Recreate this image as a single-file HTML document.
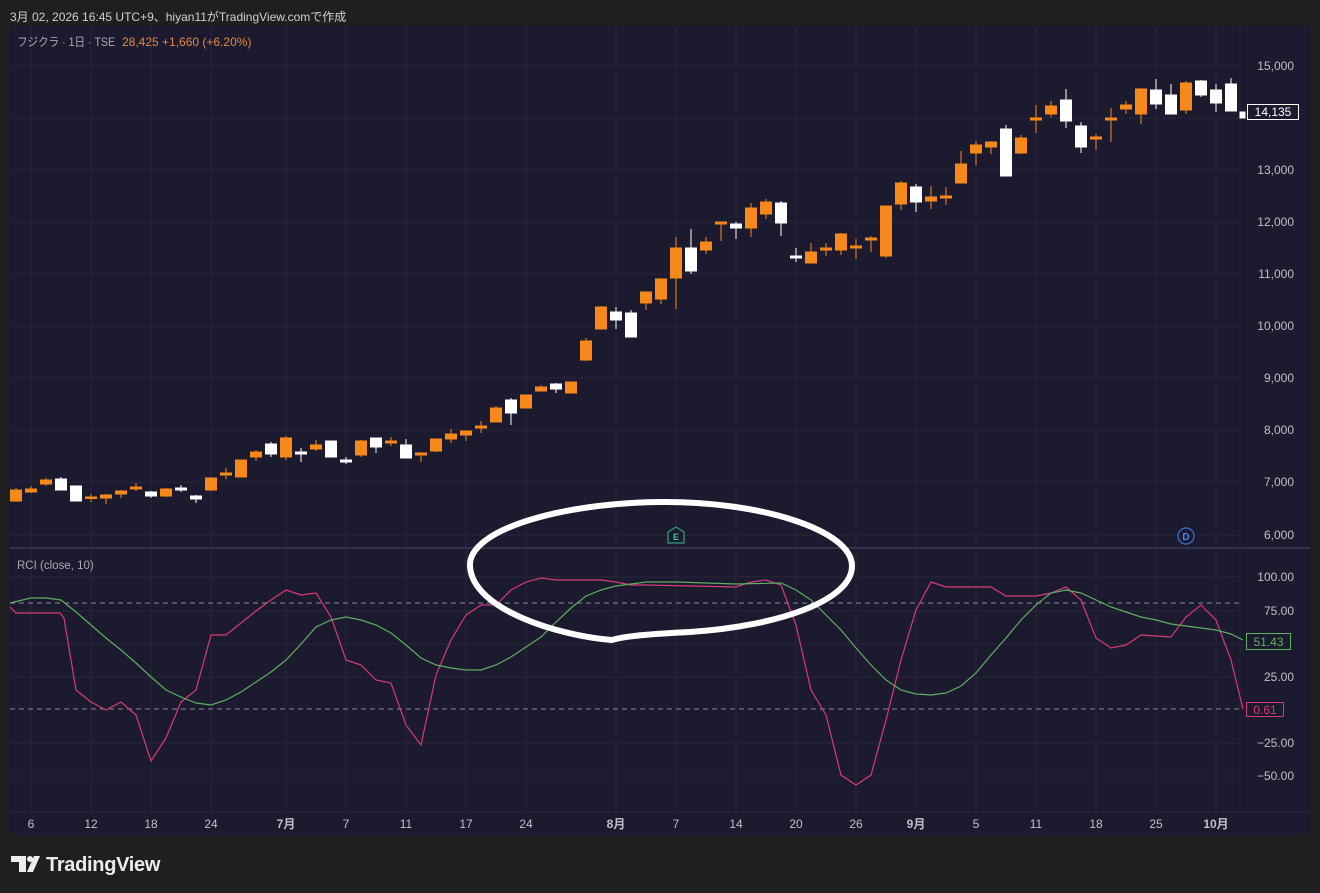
<!DOCTYPE html>
<html><head><meta charset="utf-8"><style>
html,body{margin:0;padding:0;background:#1f1f1f;width:1320px;height:893px;overflow:hidden}
svg{display:block}
text{font-family:"Liberation Sans","Noto Sans CJK JP",sans-serif}
</style></head><body>
<svg width="1320" height="893" viewBox="0 0 1320 893" xmlns="http://www.w3.org/2000/svg">
<rect width="1320" height="893" fill="#1f1f1f"/>
<text x="10" y="21" font-size="12" fill="#d0d0d0">3月 02, 2026 16:45 UTC+9、hiyan11がTradingView.comで作成</text>
<rect x="10" y="26" width="1300" height="809" fill="#1c1a2f"/>
<g stroke="#272539" stroke-width="1">
<path d="M31 26V812M91 26V812M151 26V812M211 26V812M286 26V812M346 26V812M406 26V812M466 26V812M526 26V812M616 26V812M676 26V812M736 26V812M796 26V812M856 26V812M916 26V812M976 26V812M1036 26V812M1096 26V812M1156 26V812M1216 26V812"/>
<path d="M10 66H1240M10 118H1240M10 170H1240M10 222H1240M10 274H1240M10 326H1240M10 378H1240M10 430H1240M10 482H1240M10 535H1240M10 577H1240M10 611H1240M10 644H1240M10 677H1240M10 743H1240M10 776H1240"/>
</g>
<line x1="10" y1="548" x2="1310" y2="548" stroke="#34324a" stroke-width="2"/>
<line x1="10" y1="812" x2="1310" y2="812" stroke="#2a2840"/>
<line x1="1240" y1="26" x2="1240" y2="812" stroke="#25233a"/>
<text x="17" y="46" font-size="12" fill="#a8a8b4" textLength="98" lengthAdjust="spacingAndGlyphs">フジクラ · 1日 · TSE</text>
<text x="122" y="46" font-size="12" fill="#e08a44">28,425  +1,660 (+6.20%)</text>
<text x="17" y="569" font-size="11.5" fill="#a8a8b4">RCI (close, 10)</text>
<g font-size="12" fill="#c0c0c8" text-anchor="end">
<text x="1294" y="70">15,000</text><text x="1294" y="174">13,000</text><text x="1294" y="226">12,000</text><text x="1294" y="278">11,000</text><text x="1294" y="330">10,000</text><text x="1294" y="382">9,000</text><text x="1294" y="434">8,000</text><text x="1294" y="486">7,000</text><text x="1294" y="539">6,000</text>
<text x="1294" y="581">100.00</text><text x="1294" y="615">75.00</text><text x="1294" y="681">25.00</text><text x="1294" y="747">−25.00</text><text x="1294" y="780">−50.00</text>
</g>
<g font-size="12" fill="#c0c0c8" text-anchor="middle">
<text x="31" y="828">6</text><text x="91" y="828">12</text><text x="151" y="828">18</text><text x="211" y="828">24</text><text x="286" y="828" font-weight="bold">7月</text><text x="346" y="828">7</text><text x="406" y="828">11</text><text x="466" y="828">17</text><text x="526" y="828">24</text><text x="616" y="828" font-weight="bold">8月</text><text x="676" y="828">7</text><text x="736" y="828">14</text><text x="796" y="828">20</text><text x="856" y="828">26</text><text x="916" y="828" font-weight="bold">9月</text><text x="976" y="828">5</text><text x="1036" y="828">11</text><text x="1096" y="828">18</text><text x="1156" y="828">25</text><text x="1216" y="828" font-weight="bold">10月</text>
</g>
<g stroke="#f7881a" fill="#f7881a" stroke-width="1">
<line x1="16" y1="488" x2="16" y2="502"/><rect x="10.5" y="490" width="11" height="11"/>
<line x1="31" y1="486" x2="31" y2="493"/><rect x="25.5" y="489" width="11" height="3"/>
<line x1="46" y1="478" x2="46" y2="486"/><rect x="40.5" y="480" width="11" height="4"/>
<line x1="91" y1="494" x2="91" y2="502"/><rect x="85.5" y="497" width="11" height="1.5"/>
<line x1="106" y1="494" x2="106" y2="504"/><rect x="100.5" y="495" width="11" height="3"/>
<line x1="121" y1="490" x2="121" y2="498"/><rect x="115.5" y="491" width="11" height="3"/>
<line x1="136" y1="483" x2="136" y2="491"/><rect x="130.5" y="487" width="11" height="2"/>
<line x1="166" y1="488" x2="166" y2="497"/><rect x="160.5" y="489" width="11" height="7"/>
<line x1="211" y1="477" x2="211" y2="491"/><rect x="205.5" y="478" width="11" height="12"/>
<line x1="226" y1="468" x2="226" y2="479"/><rect x="220.5" y="473" width="11" height="2"/>
<line x1="241" y1="460" x2="241" y2="477"/><rect x="235.5" y="460" width="11" height="17"/>
<line x1="256" y1="450" x2="256" y2="461"/><rect x="250.5" y="452" width="11" height="5"/>
<line x1="286" y1="436" x2="286" y2="460"/><rect x="280.5" y="438" width="11" height="19"/>
<line x1="316" y1="440" x2="316" y2="451"/><rect x="310.5" y="445" width="11" height="4"/>
<line x1="361" y1="440" x2="361" y2="457"/><rect x="355.5" y="441" width="11" height="14"/>
<line x1="391" y1="437" x2="391" y2="446"/><rect x="385.5" y="441" width="11" height="2"/>
<line x1="421" y1="453" x2="421" y2="462"/><rect x="415.5" y="453" width="11" height="2"/>
<line x1="436" y1="439" x2="436" y2="452"/><rect x="430.5" y="439" width="11" height="12"/>
<line x1="451" y1="429" x2="451" y2="443"/><rect x="445.5" y="434" width="11" height="5"/>
<line x1="466" y1="431" x2="466" y2="441"/><rect x="460.5" y="431" width="11" height="4"/>
<line x1="481" y1="421" x2="481" y2="433"/><rect x="475.5" y="426" width="11" height="2"/>
<line x1="496" y1="406" x2="496" y2="422"/><rect x="490.5" y="408" width="11" height="14"/>
<line x1="526" y1="395" x2="526" y2="408"/><rect x="520.5" y="395" width="11" height="13"/>
<line x1="541" y1="385" x2="541" y2="391"/><rect x="535.5" y="387" width="11" height="4"/>
<line x1="571" y1="382" x2="571" y2="393"/><rect x="565.5" y="382" width="11" height="11"/>
<line x1="586" y1="338" x2="586" y2="361"/><rect x="580.5" y="341" width="11" height="19"/>
<line x1="601" y1="306" x2="601" y2="329"/><rect x="595.5" y="307" width="11" height="22"/>
<line x1="646" y1="292" x2="646" y2="310"/><rect x="640.5" y="292" width="11" height="11"/>
<line x1="661" y1="278" x2="661" y2="304"/><rect x="655.5" y="279" width="11" height="20"/>
<line x1="676" y1="237" x2="676" y2="309"/><rect x="670.5" y="248" width="11" height="30"/>
<line x1="706" y1="237" x2="706" y2="254"/><rect x="700.5" y="242" width="11" height="8"/>
<line x1="721" y1="222" x2="721" y2="241"/><rect x="715.5" y="222" width="11" height="2"/>
<line x1="751" y1="203" x2="751" y2="237"/><rect x="745.5" y="208" width="11" height="20"/>
<line x1="766" y1="199" x2="766" y2="219"/><rect x="760.5" y="202" width="11" height="12"/>
<line x1="811" y1="243" x2="811" y2="263"/><rect x="805.5" y="252" width="11" height="11"/>
<line x1="826" y1="243" x2="826" y2="256"/><rect x="820.5" y="248" width="11" height="2"/>
<line x1="841" y1="233" x2="841" y2="255"/><rect x="835.5" y="234" width="11" height="16"/>
<line x1="856" y1="239" x2="856" y2="259"/><rect x="850.5" y="246" width="11" height="2"/>
<line x1="871" y1="236" x2="871" y2="252"/><rect x="865.5" y="238" width="11" height="2"/>
<line x1="886" y1="206" x2="886" y2="258"/><rect x="880.5" y="206" width="11" height="50"/>
<line x1="901" y1="181" x2="901" y2="210"/><rect x="895.5" y="183" width="11" height="21"/>
<line x1="931" y1="186" x2="931" y2="209"/><rect x="925.5" y="197" width="11" height="4"/>
<line x1="946" y1="187" x2="946" y2="205"/><rect x="940.5" y="196" width="11" height="2"/>
<line x1="961" y1="151" x2="961" y2="183"/><rect x="955.5" y="164" width="11" height="19"/>
<line x1="976" y1="141" x2="976" y2="165"/><rect x="970.5" y="145" width="11" height="8"/>
<line x1="991" y1="141" x2="991" y2="154"/><rect x="985.5" y="142" width="11" height="5"/>
<line x1="1021" y1="135" x2="1021" y2="154"/><rect x="1015.5" y="138" width="11" height="15"/>
<line x1="1036" y1="105" x2="1036" y2="133"/><rect x="1030.5" y="118" width="11" height="2"/>
<line x1="1051" y1="101" x2="1051" y2="117"/><rect x="1045.5" y="106" width="11" height="8"/>
<line x1="1096" y1="134" x2="1096" y2="150"/><rect x="1090.5" y="137" width="11" height="2"/>
<line x1="1111" y1="108" x2="1111" y2="142"/><rect x="1105.5" y="118" width="11" height="2"/>
<line x1="1126" y1="101" x2="1126" y2="114"/><rect x="1120.5" y="105" width="11" height="4"/>
<line x1="1141" y1="88" x2="1141" y2="124"/><rect x="1135.5" y="89" width="11" height="25"/>
<line x1="1186" y1="81" x2="1186" y2="114"/><rect x="1180.5" y="83" width="11" height="27"/>
</g>
<g stroke="#ffffff" fill="#ffffff" stroke-width="1">
<line x1="61" y1="477" x2="61" y2="490"/><rect x="55.5" y="479" width="11" height="11"/>
<rect x="70.5" y="486" width="11" height="15"/>
<line x1="151" y1="491" x2="151" y2="498"/><rect x="145.5" y="492" width="11" height="4"/>
<line x1="181" y1="485" x2="181" y2="492"/><rect x="175.5" y="488" width="11" height="2"/>
<line x1="196" y1="495" x2="196" y2="503"/><rect x="190.5" y="496" width="11" height="3"/>
<line x1="271" y1="442" x2="271" y2="457"/><rect x="265.5" y="444" width="11" height="10"/>
<line x1="301" y1="448" x2="301" y2="462"/><rect x="295.5" y="452" width="11" height="2"/>
<rect x="325.5" y="441" width="11" height="16"/>
<line x1="346" y1="457" x2="346" y2="464"/><rect x="340.5" y="460" width="11" height="2"/>
<line x1="376" y1="438" x2="376" y2="453"/><rect x="370.5" y="438" width="11" height="9"/>
<line x1="406" y1="439" x2="406" y2="458"/><rect x="400.5" y="445" width="11" height="13"/>
<line x1="511" y1="398" x2="511" y2="425"/><rect x="505.5" y="400" width="11" height="13"/>
<line x1="556" y1="383" x2="556" y2="393"/><rect x="550.5" y="384" width="11" height="5"/>
<line x1="616" y1="307" x2="616" y2="329"/><rect x="610.5" y="312" width="11" height="8"/>
<line x1="631" y1="310" x2="631" y2="337"/><rect x="625.5" y="313" width="11" height="24"/>
<line x1="691" y1="229" x2="691" y2="274"/><rect x="685.5" y="248" width="11" height="23"/>
<line x1="736" y1="222" x2="736" y2="239"/><rect x="730.5" y="224" width="11" height="4"/>
<line x1="781" y1="201" x2="781" y2="236"/><rect x="775.5" y="203" width="11" height="20"/>
<line x1="796" y1="248" x2="796" y2="262"/><rect x="790.5" y="256" width="11" height="2"/>
<line x1="916" y1="184" x2="916" y2="212"/><rect x="910.5" y="187" width="11" height="15"/>
<line x1="1006" y1="125" x2="1006" y2="176"/><rect x="1000.5" y="129" width="11" height="47"/>
<line x1="1066" y1="89" x2="1066" y2="128"/><rect x="1060.5" y="100" width="11" height="21"/>
<line x1="1081" y1="122" x2="1081" y2="153"/><rect x="1075.5" y="126" width="11" height="21"/>
<line x1="1156" y1="79" x2="1156" y2="109"/><rect x="1150.5" y="90" width="11" height="14"/>
<line x1="1171" y1="84" x2="1171" y2="114"/><rect x="1165.5" y="95" width="11" height="19"/>
<line x1="1201" y1="80" x2="1201" y2="97"/><rect x="1195.5" y="81" width="11" height="14"/>
<line x1="1216" y1="84" x2="1216" y2="112"/><rect x="1210.5" y="90" width="11" height="13"/>
<line x1="1231" y1="78" x2="1231" y2="111"/><rect x="1225.5" y="84" width="11" height="27"/>
<rect x="1240" y="112" width="5" height="6"/>
</g>
<rect x="1247.5" y="104.5" width="51" height="15" fill="#1c1a2f" stroke="#ffffff"/>
<text x="1273" y="116" font-size="12" fill="#ffffff" text-anchor="middle">14,135</text>
<g stroke="#8a889a" stroke-dasharray="5,4" stroke-width="1">
<line x1="10" y1="603" x2="1240" y2="603"/><line x1="10" y1="709" x2="1240" y2="709"/>
</g>
<polyline fill="none" stroke="#d63a7a" stroke-width="1.2" points="10,607 16,613 60,613 64,618 76,690 91,702 106,710 121,702 136,715 151,761 166,738 181,702 196,690 211,635 226,635 241,623 256,611 271,600 286,590 301,595 316,593 331,617 346,660 361,665 376,680 391,683 406,725 421,745 436,675 451,640 466,615 481,605 496,605 511,590 526,582 541,578 556,580 571,580 586,580 601,580 616,582 631,585 646,585 736,587 751,582 766,580 781,585 796,625 811,690 826,715 841,775 856,785 871,775 886,720 901,660 916,610 931,582 946,587 991,587 1006,596 1036,596 1051,593 1066,587 1081,600 1096,638 1111,648 1126,645 1141,635 1171,637 1186,617 1201,605 1216,620 1231,660 1243,709"/>
<polyline fill="none" stroke="#5fae62" stroke-width="1.2" points="10,603 31,598 46,598 61,600 76,612 91,625 106,638 121,650 136,663 151,677 166,690 181,697 196,703 211,705 226,700 241,692 256,682 271,672 286,660 301,644 316,627 331,620 346,617 361,620 376,625 391,633 406,645 421,658 436,665 451,668 466,670 481,670 496,665 511,657 526,647 541,637 556,622 571,608 586,596 601,590 616,586 631,584 646,582 676,582 736,584 781,583 796,590 811,600 826,615 841,630 856,648 871,665 886,680 901,690 916,694 931,695 946,693 961,686 976,673 991,655 1006,638 1021,620 1036,605 1051,593 1066,590 1081,593 1096,600 1111,607 1126,612 1141,617 1156,620 1171,624 1186,626 1201,628 1216,630 1231,634 1243,640"/>
<rect x="1246.5" y="633.5" width="44" height="16" fill="#1c1a2f" stroke="#5fae62"/>
<text x="1268.5" y="646" font-size="12" fill="#5fae62" text-anchor="middle">51.43</text>
<rect x="1246.5" y="702.5" width="37" height="14" fill="#1c1a2f" stroke="#d63a7a"/>
<text x="1265" y="714" font-size="12" fill="#d63a7a" text-anchor="middle">0.61</text>
<path d="M470 566 C468 530 560 503 660 502 C760 501 852 530 852 566 C852 600 780 626 690 632 C650 634 625 636 612 640 C560 636 472 610 470 566 Z" fill="none" stroke="#ffffff" stroke-width="6"/>
<path d="M676 527 L684 532 L684 543 L668 543 L668 532 Z" fill="#1c1a2f" stroke="#2f9a78" stroke-width="1.3"/>
<text x="676" y="540" font-size="9" font-weight="bold" fill="#3fc392" text-anchor="middle">E</text>
<circle cx="1186" cy="536" r="8" fill="#1c1a2f" stroke="#3a6fd8" stroke-width="1.3"/>
<text x="1186" y="540" font-size="10" font-weight="bold" fill="#4d82ee" text-anchor="middle">D</text>
<g fill="#ececec">
<path d="M11 856 H26 V872 H19 V862 H11 Z"/>
<circle cx="30" cy="859" r="3"/>
<path d="M34 856 H40 L33 872 H27 Z"/>
</g>
<text x="46" y="871" font-size="20" font-weight="bold" fill="#ececec" letter-spacing="-0.3">TradingView</text>
</svg>
</body></html>
